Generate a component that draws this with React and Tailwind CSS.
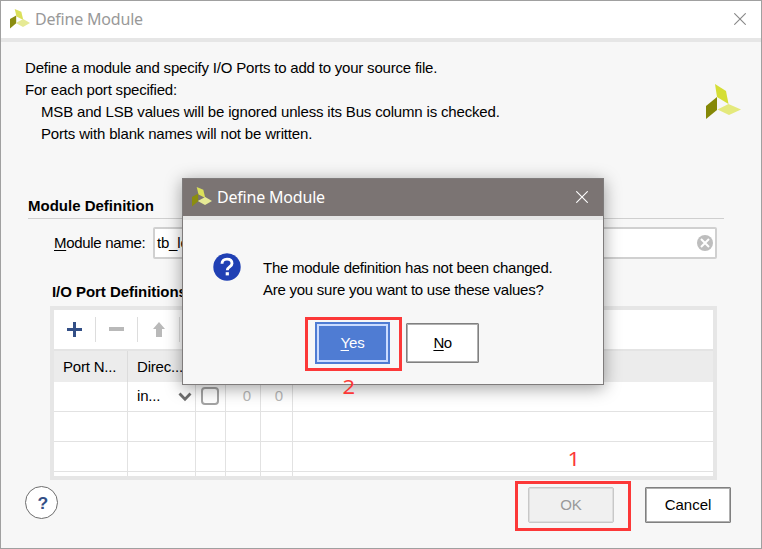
import React from "react";

const ARIAL = "font-['Liberation_Sans',Arial,sans-serif]";

function Logo({ className }) {
  return (
    <svg viewBox="0 0 35 35" className={className}>
      <polygon points="9,0 20,7 22.5,20 11,13" fill="#d5de35" />
      <polygon points="0,22 11,13 11,26 0,35" fill="#858807" />
      <polygon points="11.5,25.5 22.5,20 35,25.5 23,31" fill="#e4e97c" />
    </svg>
  );
}

function TitleLogo({ className }) {
  return (
    <svg viewBox="0 0 20 20" className={className}>
      <polygon points="4.7,0 11.3,2.7 13.3,10.9 6.5,7.5" fill="#dbe05a" />
      <polygon points="0,10 6.2,6.5 6.2,14.2 0,19.5" fill="#8b8d10" />
      <polygon points="5.8,14 13.2,9.9 20,14 13,18" fill="#e6ea95" />
    </svg>
  );
}

function Close({ className }) {
  return (
    <svg viewBox="0 0 12 12" className={className} fill="none" stroke="currentColor" strokeWidth="1.1">
      <path d="M0.3 0.3L11.7 11.7M11.7 0.3L0.3 11.7" />
    </svg>
  );
}

function Row({ first, last }) {
  const line = last ? "" : "border-b border-[#e2e2e2]";
  return (
    <div className={`flex ${last ? "h-[4px]" : "h-[30px]"} shrink-0 bg-white ${line}`}>
      <div className="w-[74px] border-r border-[#e2e2e2]" />
      <div className="flex w-[68px] items-center justify-between border-r border-[#e2e2e2] pb-[2px] pl-[9px] pr-[3px]">
        {first && <span>in...</span>}
        {first && (
          <svg viewBox="0 0 14 10" className="mt-[3px] h-[10px] w-[14px]" fill="none" stroke="#6e6e6e" strokeWidth="2.8">
            <path d="M1.5 1.5L7 7.2L12.5 1.5" />
          </svg>
        )}
      </div>
      <div className="flex w-[30px] items-center border-r border-[#e2e2e2] pb-px pl-[5px]">
        {first && <span className="size-[18px] rounded-[4px] border-2 border-[#a3a3a3]" />}
      </div>
      <div className="flex w-[35px] items-center justify-end border-r border-[#e2e2e2] pb-[2px] pr-[9px] text-[#b8b8b8]">{first && "0"}</div>
      <div className="flex w-[32px] items-center justify-end border-r border-[#e2e2e2] pb-[2px] pr-[9px] text-[#b8b8b8]">{first && "0"}</div>
    </div>
  );
}

function ConfirmDialog() {
  return (
    <div className="absolute left-[181px] top-[177px] flex h-[207px] w-[422px] flex-col border border-[#7f7c7c] bg-[#f7f7f7] shadow-[0_3px_16px_rgba(0,0,0,0.38)]">
      <div className="flex h-[37px] shrink-0 items-center bg-[#7b7473] pl-[9px] pr-[15px] text-white">
        <TitleLogo className="mb-px size-[20px]" />
        <span className="mb-[2px] ml-[5px] font-['Noto_Sans',sans-serif] text-[16px] leading-[20px] tracking-[-0.2px]">Define Module</span>
        <Close className="mb-[2px] ml-auto size-[12px]" />
      </div>
      <div className="h-[4px] shrink-0 bg-[#e6e6e6]" />
      <div className="flex pl-[30px] pt-[33px]">
        <svg viewBox="0 0 28 28" className="size-[28px]">
          <circle cx="14" cy="14" r="13.7" fill="#2040b4" />
          <path d="M9 10.8C9 7.7 11 6.1 14 6.1S19 7.8 19 10.4C19 14 14.3 13.7 14.3 17.2" fill="none" stroke="#fff" strokeWidth="2.9" />
          <rect x="12.7" y="19.2" width="3.2" height="3.2" fill="#fff" />
        </svg>
        <div className="ml-[22px] mt-[4px] whitespace-nowrap leading-[22px] tracking-[-0.25px]">
          <p>The module definition has not been changed.</p>
          <p>Are you sure you want to use these values?</p>
        </div>
      </div>
      <div className="flex pl-[122px] pt-[16px]">
        <div className="h-[54px] w-[97px] border-[3px] border-[#fc3838] pl-[7px] pt-[2px]">
          <button className="h-[42px] w-[75px] bg-[#4f7cd3] p-[2px] text-white">
            <span className="flex h-full items-center justify-center border-2 border-[#cbdcff]">
              <span><u className="decoration-1 underline-offset-2">Y</u>es</span>
            </span>
          </button>
        </div>
        <button className="ml-[4px] mt-[6px] h-[40px] w-[73px] rounded-[1px] border border-[#808080] bg-white pb-px tracking-[-0.5px] shadow-[inset_0_0_0_1px_#b0b0b0]">
          <u className="decoration-1 underline-offset-2">N</u>o
        </button>
      </div>
    </div>
  );
}

export default function App() {
  return (
    <div className={`relative flex h-[549px] w-[762px] flex-col overflow-hidden border border-[#a0a0a0] bg-[#f7f7f7] text-[15px] leading-[22px] tracking-[-0.2px] text-black ${ARIAL}`}>
      <header className="flex h-[37px] shrink-0 items-center bg-white pl-[9px] pr-[15px] text-[#999]">
        <TitleLogo className="mb-px size-[20px]" />
        <span className="mb-px ml-[5px] font-['Noto_Sans',sans-serif] text-[16px] leading-[20px] tracking-[-0.2px]">Define Module</span>
        <Close className="mb-px ml-auto size-[12px] text-[#888]" />
      </header>
      <div className="h-[4px] shrink-0 bg-[#e6e6e6]" />
      <section className="flex h-[153px] shrink-0 justify-between pl-[24px] pr-[20px] pt-[15px]">
        <div className="whitespace-nowrap">
          <p>Define a module and specify I/O Ports to add to your source file.</p>
          <p>For each port specified:</p>
          <p className="pl-[16px] tracking-[-0.17px]">MSB and LSB values will be ignored unless its Bus column is checked.</p>
          <p className="pl-[16px] tracking-[-0.17px]">Ports with blank names will not be written.</p>
        </div>
        <Logo className="mt-[27px] size-[35px]" />
      </section>
      <h2 className="ml-[27px] h-[24px] w-[696px] shrink-0 border-b border-[#cfcfcf] font-bold tracking-normal">Module Definition</h2>
      <div className="mt-[8px] flex h-[32px] shrink-0 items-center pl-[53px]">
        <label className="w-[99px] whitespace-nowrap tracking-[-0.3px]"><u className="decoration-1 underline-offset-2">M</u>odule name:</label>
        <div className="flex h-[32px] w-[564px] items-center justify-between rounded-[2px] border-2 border-[#d0d0d0] bg-white pl-[2px] pr-[2px]">
          <span>tb_led</span>
          <svg viewBox="0 0 16 16" className="size-[16px]">
            <circle cx="8" cy="8" r="8" fill="#bebebe" />
            <path d="M4 4L12 12M12 4L4 12" stroke="#fff" strokeWidth="2" />
          </svg>
        </div>
      </div>
      <h2 className="ml-[51px] mt-[22px] h-[25px] shrink-0 font-bold tracking-[-0.05px]">I/O Port Definitions</h2>
      <div className="ml-[49px] flex h-[174px] w-[667px] shrink-0 flex-col overflow-hidden border-4 border-[#e6e6e6]">
        <div className="flex h-[39px] shrink-0 items-center bg-white">
          <div className="flex h-[25px] w-[42px] items-center justify-center border-r border-[#ddd]">
            <svg viewBox="0 0 15 15" className="size-[15px]"><path d="M7.5 0V15M0 7.5H15" stroke="#334f86" strokeWidth="3" /></svg>
          </div>
          <div className="flex h-[25px] w-[42px] items-center justify-center border-r border-[#ddd]">
            <div className="mb-px h-[4px] w-[15px] bg-[#b9b9b9]" />
          </div>
          <div className="flex h-[25px] w-[42px] items-center justify-center border-r border-[#ddd]">
            <svg viewBox="0 0 12 15" className="h-[15px] w-[12px]"><path d="M6 0L12 7H9V15H3V7H0Z" fill="#b9b9b9" /></svg>
          </div>
        </div>
        <div className="h-[2px] shrink-0 bg-[#e4e4e4]" />
        <div className="flex h-[31px] shrink-0 items-center bg-[#ececec]">
          <div className="flex h-full w-[74px] items-center border-r border-[#dcdcdc] pl-[9px]">Port N...</div>
          <div className="flex h-full w-[68px] items-center border-r border-[#dcdcdc] pl-[9px]">Direc...</div>
        </div>
        <Row first />
        <Row />
        <Row />
        <Row last />
      </div>
      <footer className="flex items-start pl-[24px] pt-px">
        <button className="mt-[5px] flex size-[33px] items-center justify-center rounded-full border border-[#6d6d6d] bg-white pl-[2px] pt-[2px] text-[#334f86]"><span className="scale-x-110 text-[16px] font-bold">?</span></button>
        <div className="ml-[457px] h-[50px] w-[116px] border-[3px] border-[#fc3838] pl-[10px] pt-[3px]">
          <button className="block h-[36px] w-[86px] rounded-[2px] border border-[#c8c8c8] bg-[#f0f0f0] tracking-normal text-[#999] shadow-[inset_0_0_0_1px_#dedede]">OK</button>
        </div>
        <button className="ml-[14px] mt-[6px] h-[36px] w-[86px] rounded-[1px] border border-[#808080] bg-white tracking-normal shadow-[inset_0_0_0_1px_#b0b0b0]">Cancel</button>
      </footer>
      <ConfirmDialog />
      <span className="absolute left-[342px] top-[376px] scale-x-110 font-['Noto_Sans',sans-serif] text-[20px] leading-[20px] text-[#fc3838]">2</span>
      <span className="absolute left-[567px] top-[448px] scale-x-110 font-['Noto_Sans',sans-serif] text-[20px] leading-[20px] text-[#fc3838]">1</span>
    </div>
  );
}
